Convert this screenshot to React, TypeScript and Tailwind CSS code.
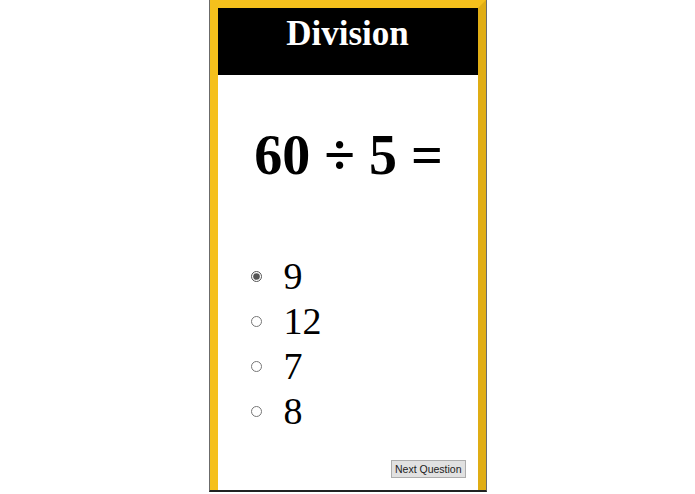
import { useState } from "react";

const answers = ["9", "12", "7", "8"];

export default function App() {
  const [picked, setPicked] = useState("9");

  return (
    <div className="flex h-[494px] w-full justify-center bg-white">
      <div className="flex h-[492px] w-[278px] flex-col border-x border-b-2 border-x-[#6b6b6b] border-b-[#222]">
        <div className="flex flex-1 flex-col border-x-[8px] border-t-[8px] border-l-[#f5c01c] border-r-[#e0ad14] border-t-[#f5c01c] bg-white">
          <div className="flex h-[67px] items-start justify-center bg-black pt-[4px]">
            <h1
              className="text-[35px] font-bold leading-[44px] text-white"
              style={{ fontFamily: '"Liberation Serif", "Times New Roman", serif' }}
            >
              Division
            </h1>
          </div>

          <div
            className="flex flex-1 flex-col"
            style={{ fontFamily: '"Liberation Serif", "Times New Roman", serif' }}
          >
            <div className="mt-[45px] flex justify-center pl-[2px] text-[56px] font-bold leading-[70px] text-black">
              60 ÷ 5 =
            </div>

            <div className="mt-[64px] flex flex-col pl-[33px]">
              {answers.map((a) => (
                <label key={a} className="flex h-[45px] items-center gap-[22px] text-[38px] leading-[45px] text-black">
                  <input
                    type="radio"
                    name="answer"
                    checked={picked === a}
                    onChange={() => setPicked(a)}
                    className="m-0 h-[11px] w-[11px] accent-[#555]"
                  />
                  <span>{a}</span>
                </label>
              ))}
            </div>

            <div className="mt-auto flex justify-end pb-[12px] pr-[12px]">
              <button
                className="h-[18px] border border-[#adadad] bg-[#e1e1e1] px-[3px] text-[10.5px] leading-[16px] text-[#222]"
                style={{ fontFamily: '"Liberation Sans", Arial, sans-serif' }}
              >
                Next Question
              </button>
            </div>
          </div>
        </div>
      </div>
    </div>
  );
}
